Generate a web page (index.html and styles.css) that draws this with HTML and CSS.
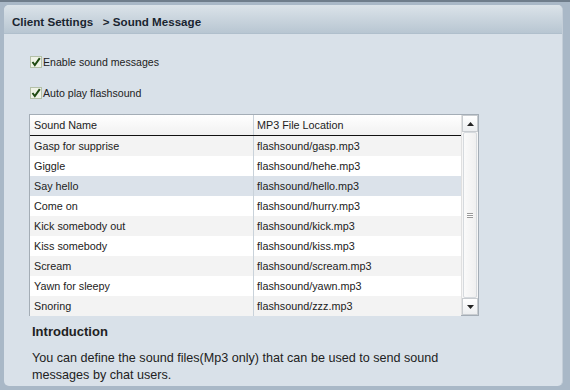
FILE: index.html
```html
<!DOCTYPE html>
<html>
<head>
<meta charset="utf-8">
<link rel="stylesheet" href="styles.css">
</head>
<body>
<div class="frame">
  <div class="panel">
    <div class="header">Client Settings&nbsp;&nbsp; &gt; Sound Message</div>
    <div class="body">
      <label class="check">
        <svg class="cb" width="12" height="12" viewBox="0 0 12 12"><rect x="0.5" y="0.5" width="11" height="11" fill="#eef2e6" stroke="#b4c0a8"/><path d="M2.5 6 L4.8 9 L9.8 2.2" fill="none" stroke="#1f4a12" stroke-width="2"/></svg>
        <span>Enable sound messages</span>
      </label>
      <label class="check">
        <svg class="cb" width="12" height="12" viewBox="0 0 12 12"><rect x="0.5" y="0.5" width="11" height="11" fill="#eef2e6" stroke="#b4c0a8"/><path d="M2.5 6 L4.8 9 L9.8 2.2" fill="none" stroke="#1f4a12" stroke-width="2"/></svg>
        <span>Auto play flashsound</span>
      </label>
      <div class="table">
        <div class="grid">
          <div class="row head"><div class="c1">Sound Name</div><div class="c2">MP3 File Location</div></div>
          <div class="row alt"><div class="c1">Gasp for supprise</div><div class="c2">flashsound/gasp.mp3</div></div>
          <div class="row"><div class="c1">Giggle</div><div class="c2">flashsound/hehe.mp3</div></div>
          <div class="row sel"><div class="c1">Say hello</div><div class="c2">flashsound/hello.mp3</div></div>
          <div class="row"><div class="c1">Come on</div><div class="c2">flashsound/hurry.mp3</div></div>
          <div class="row alt"><div class="c1">Kick somebody out</div><div class="c2">flashsound/kick.mp3</div></div>
          <div class="row"><div class="c1">Kiss somebody</div><div class="c2">flashsound/kiss.mp3</div></div>
          <div class="row alt"><div class="c1">Scream</div><div class="c2">flashsound/scream.mp3</div></div>
          <div class="row"><div class="c1">Yawn for sleepy</div><div class="c2">flashsound/yawn.mp3</div></div>
          <div class="row alt"><div class="c1">Snoring</div><div class="c2">flashsound/zzz.mp3</div></div>
        </div>
        <div class="scroll">
          <div class="btn"><svg width="7" height="4" viewBox="0 0 7 4"><path d="M0 4 L3.5 0 L7 4 Z" fill="#222"/></svg></div>
          <div class="thumb"><span class="grip"></span></div>
          <div class="btn"><svg width="7" height="4" viewBox="0 0 7 4"><path d="M0 0 L3.5 4 L7 0 Z" fill="#222"/></svg></div>
        </div>
      </div>
      <h2 class="intro-title">Introduction</h2>
      <p class="intro">You can define the sound files(Mp3 only) that can be used to send sound messages by chat users.</p>
    </div>
  </div>
</div>
</body>
</html>
```

FILE: styles.css
```css
html, body {
  margin: 0;
  padding: 0;
}
body {
  background: #a9b8c7;
  width: 570px;
  height: 390px;
  overflow: hidden;
  font-family: "Liberation Sans", Arial, sans-serif;
  color: #222;
  border-top: 2px solid #6f7d8b;
  box-sizing: border-box;
}
.frame {
  padding: 3px 7px 0 4px;
}
.panel {
  width: 559px;
  height: 381px;
  box-sizing: border-box;
  border-radius: 5px;
  background: #d9e1e9;
  border-right: 1px solid #c4ced8;
  overflow: hidden;
  display: flex;
  flex-direction: column;
}
.header {
  height: 29px;
  box-sizing: border-box;
  background: linear-gradient(#dbe3e9, #b8c6d2);
  border-bottom: 1px solid #b0bfcc;
  padding: 10px 0 0 8px;
  font-weight: bold;
  font-size: 11.6px;
  color: #1a2530;
}
.body {
  padding: 22px 0 0 25px;
  display: flex;
  flex-direction: column;
}
.check {
  display: flex;
  align-items: center;
  height: 12px;
  font-size: 10.6px;
  color: #222;
  margin-bottom: 19px;
}
.check + .check {
  margin-bottom: 15px;
}
.cb {
  margin-left: 1px;
  margin-right: 1px;
}
.table {
  width: 450px;
  height: 202px;
  box-sizing: border-box;
  border: 1px solid #a4adb6;
  background: #fff;
  display: flex;
}
.grid {
  flex: 1;
  display: flex;
  flex-direction: column;
}
.row {
  display: grid;
  grid-template-columns: 224px 1fr;
  height: 20px;
  font-size: 10.8px;
  line-height: 20px;
  background: #fff;
}
.row.alt { background: #f3f3f3; }
.row.sel { background: #dbe2ea; }
.row.head {
  height: 21px;
  line-height: 20px;
  background: linear-gradient(#ffffff, #f1f1f1);
  border-bottom: 1px solid #111;
  box-sizing: border-box;
}
.c1 {
  padding-left: 4px;
  border-right: 1px solid #c9d2da;
}
.c2 {
  padding-left: 3px;
}
.scroll {
  width: 16px;
  display: flex;
  flex-direction: column;
  background: #f6f6f6;
  border-left: 1px solid #e0e0e0;
}
.btn {
  height: 17px;
  box-sizing: border-box;
  border: 1px solid #c8ccd0;
  background: linear-gradient(#ffffff, #eceef0);
  display: flex;
  align-items: center;
  justify-content: center;
}
.thumb {
  flex: 1;
  margin: 0 1px;
  background: linear-gradient(90deg, #fafafa, #f0f0f0);
  border: 1px solid #d6dade;
  border-radius: 2px;
  display: flex;
  align-items: center;
  justify-content: center;
}
.grip {
  width: 6px;
  height: 5px;
  border-top: 1px solid #999;
  border-bottom: 1px solid #999;
  background: linear-gradient(#fff 40%, #999 40%, #999 60%, #fff 60%);
  box-sizing: border-box;
}
.intro-title {
  margin: 8px 0 0 3px;
  font-size: 13px;
  font-weight: bold;
  color: #222;
  line-height: 16px;
}
.intro {
  margin: 10px 0 0 3px;
  width: 440px;
  font-size: 12.6px;
  line-height: 17px;
  color: #222;
}
```
